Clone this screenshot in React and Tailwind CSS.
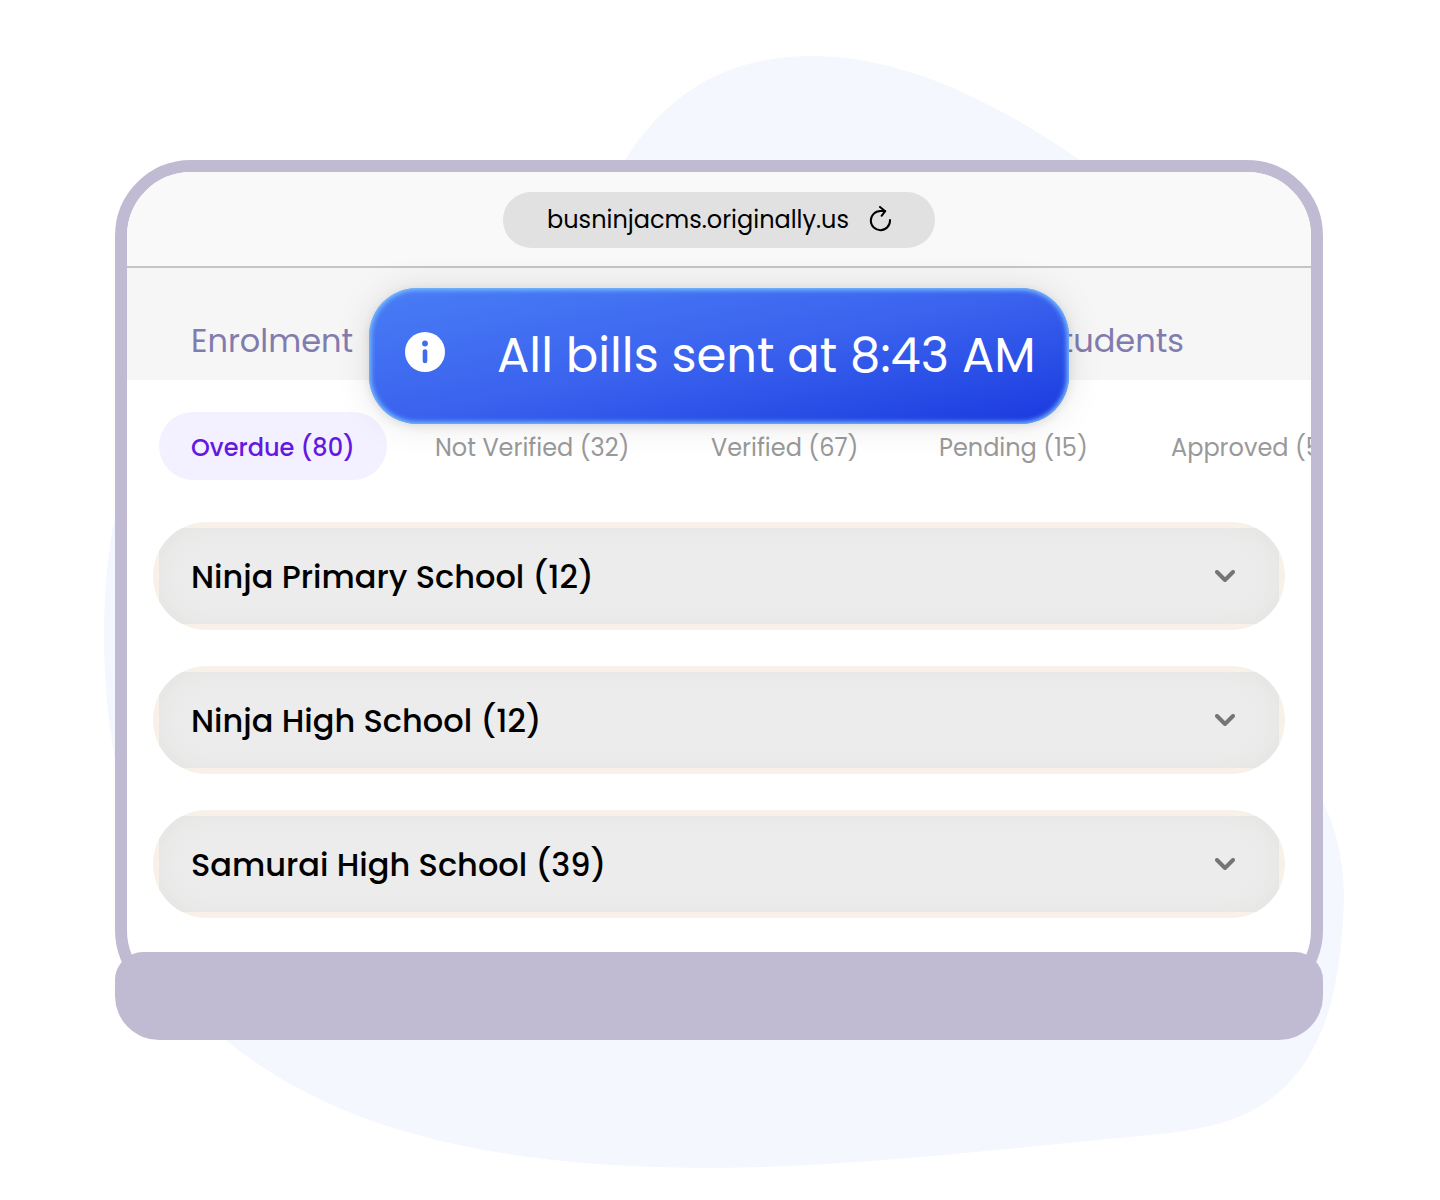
import { useState } from 'react'

const tabs = [
  { label: 'Overdue (80)', width: 'w-[228px]' },
  { label: 'Not Verified (32)', width: 'w-[260px]' },
  { label: 'Verified (67)', width: 'w-[212px]' },
  { label: 'Pending (15)', width: 'w-[216px]' },
  { label: 'Approved (56)', width: 'w-[228px]' },
]

const schools = [
  'Ninja Primary School (12)',
  'Ninja High School (12)',
  'Samurai High School (39)',
]

function Blob() {
  return (
    <svg
      className="absolute inset-0 w-full h-full"
      viewBox="0 0 1440 1200"
      preserveAspectRatio="none"
      aria-hidden="true"
    >
      <path
        fill="#f4f7fe"
        d="M625 160C668 92 728 56 812 56C900 56 990 98 1080 160L1323 802C1338 832 1344 866 1344 900C1342 960 1334 1000 1322 1030C1290 1106 1236 1126 1160 1134C1010 1148 850 1168 700 1168C500 1166 340 1134 226 1040L115 760C108 720 104 678 104 635C104 592 108 552 115 515Z"
      />
    </svg>
  )
}

function AddressBar() {
  return (
    <div className="flex justify-center items-center h-24 pt-0.5 border-b-2 border-[#c5c5c5] bg-[#f9f9f9]">
      <div className="flex items-center justify-center gap-5 w-[432px] h-14 pl-0.5 rounded-full bg-[#e1e1e1]">
        <span className="text-[24px] leading-8 text-black">busninjacms.originally.us</span>
        <button type="button" aria-label="Reload">
          <svg
            width="24"
            height="28"
            viewBox="0 0 24 28"
            fill="none"
            stroke="#000"
            strokeWidth="2"
            strokeLinecap="round"
            strokeLinejoin="round"
          >
            <path d="M16 5H11.500A9.600 9.600 0 1 0 21 14" />
            <path d="M11 1L16.200 5.200L12.600 9.800" />
          </svg>
        </button>
      </div>
    </div>
  )
}

function Toast() {
  return (
    <div
      role="status"
      className="absolute top-[116px] left-1/2 -translate-x-1/2 flex items-center w-[700px] h-[136px] pl-9 rounded-[48px] whitespace-nowrap text-white bg-linear-to-br from-[#4a7df5] via-[#3a62ee] to-[#1c37df] shadow-[inset_0_0_5px_2px_#7cc4ff,0_0_36px_rgba(0,0,0,0.1),0_2px_10px_rgba(0,0,0,0.1)]"
    >
      <svg className="shrink-0 mb-2" width="40" height="40" viewBox="0 0 40 40" aria-hidden="true">
        <circle cx="20" cy="20" r="20" fill="#fff" />
        <circle cx="20" cy="11.500" r="2.900" fill="#3f6df0" />
        <path d="M20 19.500V29" stroke="#3f6df0" strokeWidth="4.600" strokeLinecap="round" />
      </svg>
      <span className="ml-[52px] text-[48px] leading-[60px]">All bills sent at 8:43 AM</span>
    </div>
  )
}

function SchoolRow({ name }) {
  return (
    <div className="p-[6px] bg-[#f8f1e9] rounded-full overflow-hidden">
      <button type="button" className="block w-full bg-[#e7e7e6] text-left">
        <span className="flex items-center justify-between h-24 pl-8 pr-11 rounded-full bg-[#ececec] shadow-[inset_0_0_24px_4px_#e7e7e6]">
          <span className="pt-0.5 text-[32px] leading-[48px] font-medium text-black">{name}</span>
          <svg
            width="20"
            height="12"
            viewBox="0 0 20 12"
            fill="none"
            stroke="#757575"
            strokeWidth="4"
            strokeLinecap="round"
            strokeLinejoin="round"
            aria-hidden="true"
          >
            <path d="M2 2L10 10L18 2" />
          </svg>
        </span>
      </button>
    </div>
  )
}

export default function App() {
  const [active, setActive] = useState(0)

  return (
    <div className="relative min-h-screen overflow-hidden bg-white pt-40 pb-40 pl-[115px] pr-[117px] font-['Poppins','Inter',sans-serif]">
      <Blob />
      <main className="relative">
        <div className="relative overflow-hidden rounded-[76px] border-[12px] border-[#c0bbd3] bg-white pb-[76px]">
          <AddressBar />
          <nav className="flex items-start justify-between h-28 pt-[49px] pl-16 pr-[127px] bg-[#f6f6f6] text-[32px] leading-[48px] text-[#817cae]">
            <a href="#enrolment">Enrolment</a>
            <a href="#students">Students</a>
          </nav>
          <div className="flex gap-4 mt-8 pl-8 overflow-hidden">
            {tabs.map((tab, i) => (
              <button
                key={tab.label}
                type="button"
                onClick={() => setActive(i)}
                className={`${tab.width} shrink-0 h-[68px] pt-1 pl-8 rounded-full text-left text-[24px] leading-8 whitespace-nowrap ${
                  i === active ? 'bg-[#f3f1ff] text-[#6419e0] font-medium' : 'text-[#999999]'
                }`}
              >
                {tab.label}
              </button>
            ))}
          </div>
          <div className="flex flex-col gap-9 mt-[42px] px-[26px]">
            {schools.map((name) => (
              <SchoolRow key={name} name={name} />
            ))}
          </div>
          <Toast />
        </div>
        {/* laptop base */}
        <div className="relative -mt-[54px] h-[88px] bg-[#c0bbd3] rounded-t-[28px] rounded-b-[44px]" />
      </main>
    </div>
  )
}
